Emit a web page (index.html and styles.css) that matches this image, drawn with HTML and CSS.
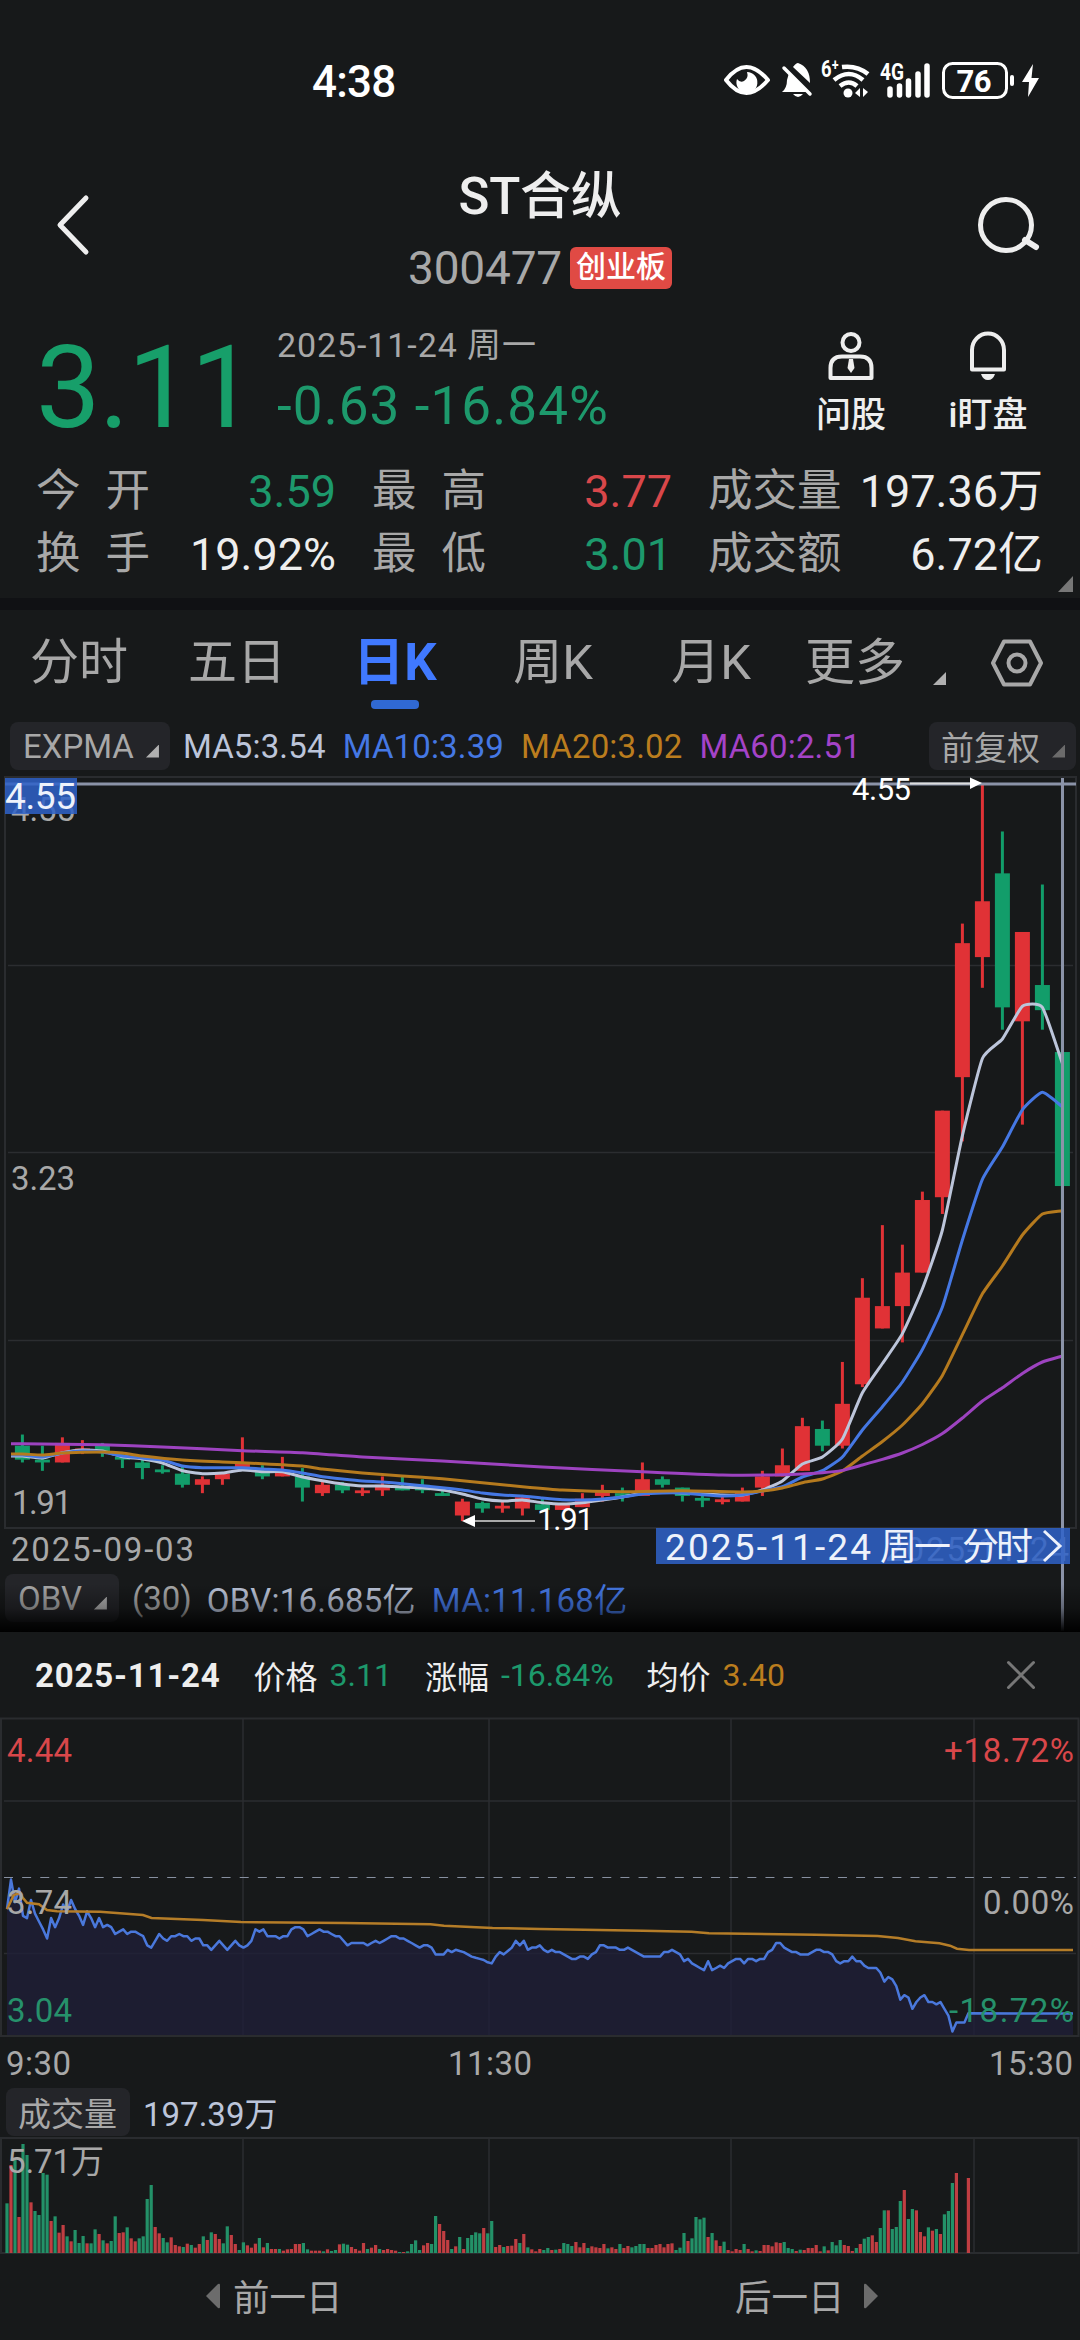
FILE: index.html
```html
<!DOCTYPE html>
<html lang="zh-CN">
<head>
  <meta charset="UTF-8">
  <meta name="viewport" content="width=device-width, initial-scale=1.0">
  <title>ST合纵 300477</title>
  <link rel="stylesheet" href="styles.css">
</head>
<body>

  <div class="status-bar">
    <span class="clock">4:38</span>
    <svg class="status-icons" viewBox="720 50 330 60" width="330" height="60">
      <path d="M726 80 Q746 54 768 80 Q746 106 726 80 Z" fill="none" stroke="#fff" stroke-width="4" stroke-linejoin="round"/>
      <path d="M747 72 A10.5 10.5 0 1 1 737 79 Q740 83 744 81 Q749 78 747 72 Z" fill="#fff"/>
      <path d="M789 73 L809 92 H782 Q787 88 787 80 Z M793 67 Q796 63 798 63 Q810 67 810 83 Z M793 94 H803 Q798 100 793 94 Z" fill="#fff"/>
      <path d="M784 68 L810 94" stroke="#fff" stroke-width="3.5" stroke-linecap="round"/>
      <path d="M842 67 Q857 65 868 74 M834 80 Q849 68 863 80 M840 86 Q849 79 857 86" fill="none" stroke="#fff" stroke-width="4.5"/>
      <circle cx="848" cy="93" r="4.5" fill="#fff"/>
      <path d="M860 88 V97 L855 93 Z M863 97 V88 L868 92 Z" fill="#fff"/>
      <text x="821" y="77" class="tiny" textLength="18" lengthAdjust="spacingAndGlyphs">6⁺</text>
      <text x="880" y="80" class="tiny" textLength="24" lengthAdjust="spacingAndGlyphs">4G</text>
      <path d="M890 89 V95 M899.5 86 V95 M908.5 81 V95 M918 74 V95 M927 66 V95" stroke="#fff" stroke-width="5.5" stroke-linecap="round"/>
      <rect x="943.5" y="63.5" width="63" height="34" rx="9" fill="none" stroke="#fff" stroke-width="3"/>
      <text x="956.5" y="91.5" class="battery" textLength="35">76</text>
      <rect x="1010" y="75" width="4" height="11" rx="2" fill="#fff"/>
      <path d="M1033 64 L1022 82 H1029 L1028 97 L1039 78 H1031.500 Z" fill="#fff"/>
    </svg>
  </div>

  <header class="header">
    <svg class="back" viewBox="0 0 40 64" width="40" height="64"><path d="M33 5 L7 32 L33 59" fill="none" stroke="#eee" stroke-width="5" stroke-linecap="round" stroke-linejoin="round"/></svg>
    <div class="title">
      <h1>ST合纵</h1>
      <p><span class="code">300477</span><span class="board">创业板</span></p>
    </div>
    <svg class="search" viewBox="0 0 66 60" width="66" height="60"><circle cx="30" cy="29" r="25.500" fill="none" stroke="#eee" stroke-width="5"/><path d="M49 44 L60 51" stroke="#eee" stroke-width="6" stroke-linecap="round"/></svg>
  </header>

  <section class="quote">
    <div class="quote-top">
      <div class="price">3.11</div>
      <div class="change">
        <div class="date">2025-11-24 周一</div>
        <div class="delta">-0.63 -16.84%</div>
      </div>
      <div class="action">
        <svg viewBox="0 0 52 52" width="52" height="52" fill="none" stroke="#eee" stroke-width="4"><circle cx="26" cy="12.500" r="8.500"/><path d="M5.500 48 V38 Q5.500 26.500 17 26.500 H35 Q46.500 26.500 46.500 38 V48 Z" stroke-linejoin="round"/><path d="M24 29 H28 L29.500 38 L26 43 L22.500 38 Z" fill="#eee" stroke="none"/></svg>
        <span>问股</span>
      </div>
      <div class="action">
        <svg viewBox="0 0 52 52" width="52" height="52" fill="none" stroke="#eee" stroke-width="4"><path d="M10 39.500 V20 A16 16.500 0 0 1 42 20 V39.500 Z" stroke-linejoin="round"/><path d="M19 44 H33 Q31 50 26 50 Q21 50 19 44 Z" fill="#eee" stroke="none"/></svg>
        <span>i盯盘</span>
      </div>
    </div>
    <div class="stats">
      <div class="stat"><span class="label spaced">今开</span><b class="down">3.59</b></div>
      <div class="stat"><span class="label spaced">最高</span><b class="up">3.77</b></div>
      <div class="stat"><span class="label">成交量</span><b>197.36万</b></div>
      <div class="stat"><span class="label spaced">换手</span><b>19.92%</b></div>
      <div class="stat"><span class="label spaced">最低</span><b class="down">3.01</b></div>
      <div class="stat"><span class="label">成交额</span><b>6.72亿</b></div>
    </div>
    <i class="corner"></i>
  </section>

  <nav class="tabs">
    <span class="tab">分时</span>
    <span class="tab">五日</span>
    <span class="tab active">日K</span>
    <span class="tab">周K</span>
    <span class="tab">月K</span>
    <span class="tab more">更多<i class="tri"></i></span>
    <svg class="settings" viewBox="0 0 56 50" width="56" height="50" fill="none" stroke="#a8a8a8" stroke-width="4"><path d="M15 3.500 H41 L52 25 L41 46.500 H15 L4 25 Z" stroke-linejoin="round"/><circle cx="28" cy="25" r="8.500"/></svg>
  </nav>

  <div class="indicators">
    <span class="chip">EXPMA<i class="tri"></i></span>
    <span class="ma ma5">MA5:3.54</span>
    <span class="ma ma10">MA10:3.39</span>
    <span class="ma ma20">MA20:3.02</span>
    <span class="ma ma60">MA60:2.51</span>
    <span class="chip adjust">前复权<i class="tri dim"></i></span>
  </div>

  <svg id="kline" class="kline" viewBox="0 775 1080 793" width="1080" height="793">
    <rect x="5" y="777" width="1071" height="751" class="frame"/>
    <path d="M8 965.500 H1073 M8 1152.500 H1073 M8 1340.500 H1073" class="grid"/>
    <g id="candles"></g>
    <g id="maLines" fill="none" stroke-width="3" stroke-linejoin="round"></g>

    <text x="11" y="1190" class="axis" textLength="64">3.23</text>
    <text x="12" y="1514" class="axis" textLength="60">1.91</text>
    <text x="11" y="821" class="axis" textLength="64">4.55</text>
    <text x="11" y="1561" class="axis" textLength="183">2025-09-03</text>
    <text x="885" y="1561" class="axis" textLength="184">2025-11-24</text>

    <path d="M5 784 H1076 M1062.500 778 V1631" class="cross"/>
    <path d="M910 783.500 H972" stroke="#ddd" stroke-width="2"/>
    <path d="M970 777.500 L982 783 L970 789 Z" fill="#fff"/>
    <text x="852" y="800" class="mark" textLength="59">4.55</text>
    <path d="M474 1521 H535" stroke="#aaa" stroke-width="2"/>
    <path d="M475 1515 L462 1521 L475 1527 Z" fill="#fff"/>
    <text x="537" y="1530" class="mark" textLength="57">1.91</text>

    <rect x="5" y="778" width="72" height="36" class="tag"/>
    <text x="5" y="809" class="tag-text" textLength="71">4.55</text>
    <rect x="656" y="1528" width="414" height="36" class="tag"/>
    <text x="665" y="1560" class="tag-text" textLength="206">2025-11-24</text>
    <text x="880" y="1560" class="tag-text" textLength="71">周一</text>
    <text x="962" y="1560" class="tag-text" textLength="71">分时</text>
    <path d="M1044 1531 L1060 1546 L1044 1561" fill="none" stroke="#eef2fb" stroke-width="3"/>
  </svg>

  <div class="indicators obv">
    <span class="chip">OBV<i class="tri"></i></span>
    <span class="param">(30)</span>
    <span class="ma5">OBV:16.685亿</span>
    <span class="ma10">MA:11.168亿</span>
  </div>

  <section class="panel">
    <div class="panel-head">
      <strong>2025-11-24</strong>
      <span class="key">价格</span><span class="down">3.11</span>
      <span class="key">涨幅</span><span class="down">-16.84%</span>
      <span class="key">均价</span><span class="ma20">3.40</span>
      <svg class="close" viewBox="0 0 30 30" width="30" height="30"><path d="M2.500 2.500 L27.500 27.500 M27.500 2.500 L2.500 27.500" stroke="#777" stroke-width="3" stroke-linecap="round"/></svg>
    </div>

    <svg id="minute" class="minute" viewBox="0 1716 1080 372" width="1080" height="372">
      <rect x="1" y="1718.500" width="1077.500" height="317.500" class="frame"/>
      <path d="M4 1801 H1076 M4 1953.500 H1076 M243 1719 V2036 M489 1719 V2036 M731 1719 V2036 M974 1719 V2036" class="grid"/>
      <path d="M4 1877.500 H1076" stroke="#8790a0" stroke-dasharray="9 9.130" />
      <g id="priceLine"></g>
      <polyline class="avg" points="7,1909.3 13.8,1895 19,1893.3 27,1902.7 39,1904.3 47,1910 57,1911.3 100,1911.7 143,1915 151.5,1918 203,1920 241,1922 344,1923 430.5,1924.3 444,1925.7 492.5,1928 540,1929 643,1930.7 691.5,1931.7 709,1933.3 815.5,1934.7 877.5,1936 898,1938 915.4,1941.3 939.5,1943.3 950,1945.7 957,1948.7 969,1950 1073,1950"/>
      <text x="7" y="1762" class="axis up" textLength="65">4.44</text>
      <text x="944" y="1762" class="axis up" textLength="130">+18.72%</text>
      <text x="7" y="1914" class="axis" textLength="65">3.74</text>
      <text x="983" y="1914" class="axis" textLength="91">0.00%</text>
      <text x="7" y="2022" class="axis down" textLength="65">3.04</text>
      <text x="949" y="2022" class="axis down" textLength="125">-18.72%</text>
      <text x="6" y="2075" class="axis" textLength="65">9:30</text>
      <text x="448" y="2075" class="axis" textLength="84">11:30</text>
      <text x="989" y="2075" class="axis" textLength="84">15:30</text>
    </svg>

    <div class="volume-head">
      <span class="chip">成交量</span>
      <span class="ma5">197.39万</span>
    </div>

    <svg id="volume" class="volume" viewBox="0 2136 1080 120" width="1080" height="120">
      <rect x="1" y="2138" width="1077.500" height="115" class="frame"/>
      <path d="M243 2138 V2253 M489 2138 V2253 M731 2138 V2253 M974 2138 V2253" class="grid"/>
      <g id="bars"></g>
      <text x="7" y="2173" class="axis" textLength="97">5.71万</text>
    </svg>

    <div class="pager">
      <span><svg viewBox="0 0 16 26" width="16" height="26"><path d="M1 13 L13 1 Q15 0 15 2 V24 Q15 26 13 25 Z" fill="#6c6c6c"/></svg>前一日</span>
      <span>后一日<svg viewBox="0 0 16 26" width="16" height="26"><path d="M15 13 L3 1 Q1 0 1 2 V24 Q1 26 3 25 Z" fill="#6c6c6c"/></svg></span>
    </div>
  </section>

<script src="charts.js"></script>
</body>
</html>
```

FILE: styles.css
```css
* { box-sizing: border-box; }
body {
  margin: 0;
  width: 1080px;
  height: 2340px;
  overflow: hidden;
  display: flex;
  flex-direction: column;
  background: #17191a;
  color: #eeeeee;
  font-family: Roboto, 'Noto Sans CJK SC', sans-serif;
}
h1, p { margin: 0; font-weight: 500; }
svg { display: block; flex: none; }

.up { color: #d9474a; fill: #d9474a; }
.down { color: #1d996c; fill: #26916b; }
.ma5 { color: #bcc5da; }
.ma10 { color: #4578e4; }
.ma20 { color: #bb7d1e; }
.ma60 { color: #a443c8; }

/* status bar */
.status-bar {
  height: 120px;
  padding: 50px 30px 0 312px;
  display: flex;
  justify-content: space-between;
}
.clock {
  font-size: 44px;
  line-height: 64px;
  letter-spacing: -0.8px;
  font-weight: 500;
  color: #fff;
}
.tiny { font-size: 24px; font-weight: 700; fill: #fff; }
.battery { font-size: 31px; font-weight: 700; fill: #fff; }

/* header */
.header {
  height: 190px;
  padding: 0 38px 0 53px;
  display: flex;
}
.back { margin-top: 73px; }
.search { margin: 76px 0 0 auto; }
.title {
  width: 270px;
  margin-left: 312px;
  padding-top: 41px;
  text-align: center;
}
.title h1 {
  font-size: 51px;
  line-height: 72px;
  letter-spacing: -0.3px;
}
.title p {
  display: flex;
  justify-content: center;
  align-items: center;
  gap: 8px;
  height: 70px;
  font-weight: 400;
}
.code {
  font-size: 46px;
  letter-spacing: -0.2px;
  color: #a8a8a8;
}
.board {
  width: 102px;
  height: 42px;
  border-radius: 6px;
  background: #e04a44;
  font-size: 30px;
  line-height: 40px;
  font-weight: 500;
  color: #fff;
}

/* quote */
.quote {
  position: relative;
  height: 300px;
  border-bottom: 12px solid #101114;
}
.quote-top {
  display: flex;
  height: 150px;
  padding-left: 36px;
}
.price {
  width: 241px;
  font-size: 115px;
  line-height: 156px;
  letter-spacing: -1.6px;
  color: #179f6a;
}
.change { width: 502px; }
.date {
  margin-top: 12px;
  font-size: 34px;
  line-height: 46px;
  letter-spacing: 0.9px;
  color: #a8a8a8;
}
.delta {
  margin-top: 6px;
  font-size: 53px;
  line-height: 64px;
  letter-spacing: 1.1px;
  color: #1d996c;
}
.action {
  width: 144px;
  margin-right: -7px;
  padding-top: 20px;
  display: flex;
  flex-direction: column;
  align-items: center;
  font-size: 35px;
  line-height: 68px;
  font-weight: 500;
}
.stats {
  display: grid;
  grid-template-columns: 300px 300px 335px;
  column-gap: 36px;
  grid-auto-rows: 63px;
  padding-left: 36px;
}
.stat {
  display: flex;
  justify-content: space-between;
  align-items: center;
  font-size: 44.5px;
  line-height: 63px;
}
.stat .label { color: #a8a8a8; white-space: nowrap; }
.stat .spaced { letter-spacing: 25px; }
.stat b { font-weight: 400; font-size: 45px; white-space: nowrap; }
.corner {
  position: absolute;
  right: 7px;
  bottom: 6px;
  width: 15px;
  height: 16px;
  background: #777;
  clip-path: polygon(100% 0, 100% 100%, 0 100%);
}

/* tabs */
.tabs {
  height: 105px;
  display: flex;
  align-items: flex-start;
  padding: 25px 0 0 0;
  font-size: 49px;
  line-height: 56px;
  color: #a8a8a8;
}
.tab { width: 158px; text-align: center; }
.tab.active {
  font-size: 51px;
  font-weight: 700;
  color: #4079ff;
}
.tab.active::after {
  content: "";
  display: block;
  width: 48px;
  height: 9px;
  margin: 9px auto 0;
  border-radius: 4px;
  background: #3069d3;
}
.more {
  display: flex;
  align-items: flex-end;
  width: 172px;
  padding-left: 15px;
  font-size: 50px;
}
.tri {
  display: inline-block;
  flex: none;
  width: 13px;
  height: 13px;
  background: #b0b0b0;
  clip-path: polygon(100% 0, 100% 100%, 0 100%);
}
.tri.dim { background: #6b6b6b; }
.more .tri { margin: 0 0 6px 28px; }
.settings { margin: 3px 0 0 27px; }

/* indicator rows */
.indicators {
  height: 60px;
  padding: 7px 4px 5px 10px;
  display: flex;
  align-items: center;
  font-size: 33px;
  white-space: nowrap;
}
.chip {
  display: flex;
  align-items: center;
  height: 48px;
  padding: 0 11px 0 13px;
  border-radius: 8px;
  background: #242529;
  color: #a8a8a8;
}
.chip .tri { margin: 10px 0 0 12px; }
.chip + .ma { margin-left: 13px; }
.ma { margin-right: 17px; letter-spacing: 0.15px; }
.adjust { margin-left: auto; padding-left: 12px; }

.kline { overflow: visible; }
.frame { fill: none; stroke: #2a2c2f; stroke-width: 2; }
.grid { fill: none; stroke: #2b2d30; stroke-width: 1.5; }
.cross { fill: none; stroke: #8b93a8; stroke-width: 3; }
.axis { font-size: 33px; fill: #a8a8a8; }
.axis.up { fill: #d9474a; }
.axis.down { fill: #26916b; }
.mark { font-size: 31px; fill: #fff; }
.tag { fill: #2e62c8; fill-opacity: 0.86; }
.tag-text { font-size: 37px; fill: #eef2fb; }

.obv {
  position: relative;
  height: 64px;
  padding: 0 0 4px 5px;
}
.obv .chip { padding: 0 12px 0 13px; }
.obv .param { margin: 0 15px 0 13px; color: #a8a8a8; }
.obv .ma5 { margin-right: 16px; }
.obv .ma5, .obv .ma10 { letter-spacing: 0.25px; }
.obv::after {
  content: "";
  position: absolute;
  left: 0;
  right: 0;
  bottom: 0;
  height: 48px;
  background: linear-gradient(to bottom, rgba(0,0,0,0), rgba(0,0,0,0.3) 50%, rgba(0,0,0,1));
}

/* intraday panel */
.panel { position: relative; background: #17191a; }
.panel-head {
  display: flex;
  align-items: center;
  height: 84px;
  padding: 2px 44px 0 35px;
  font-size: 32px;
  white-space: nowrap;
}
.panel-head strong { font-size: 33px; letter-spacing: 0.8px; }
.panel-head .key { margin: 0 12px 0 33px; }
.close { margin-left: auto; }
.price-path { fill: none; stroke: #4a78dc; stroke-width: 2.5; stroke-linejoin: round; }
.price-area { fill: #1f1f38; fill-opacity: 0.78; }
.avg { fill: none; stroke: #b57d28; stroke-width: 2.5; }
.volume-head {
  display: flex;
  align-items: center;
  gap: 13px;
  height: 48px;
  padding-left: 6px;
  font-size: 33px;
}
.volume-head .chip { width: 124px; padding: 0 0 0 12px; font-size: 33px; }
.pager {
  display: flex;
  height: 84px;
  padding: 0 0 5px;
  font-size: 36.5px;
  color: #a8a8a8;
}
.pager span {
  width: 540px;
  display: flex;
  align-items: center;
  gap: 12px;
  padding-left: 205px;
}
.pager span + span {
  gap: 18px;
  padding-left: 195px;
}
```

FILE: charts.js
```js
const UP = '#e03236';
const DOWN = '#129d6a';

// high, body top, body bottom, low, direction
const candles = [
  [2.22,2.18,2.13,2.12,0],[2.18,2.13,2.12,2.09,0],[2.21,2.19,2.12,2.12,1],[2.20,2.17,2.16,2.15,1],
  [2.19,2.18,2.16,2.14,0],[2.15,2.14,2.13,2.10,0],[2.13,2.12,2.10,2.06,0],[2.11,2.095,2.085,2.08,0],
  [2.11,2.08,2.04,2.03,0],[2.07,2.06,2.04,2.01,1],[2.08,2.08,2.06,2.04,1],[2.21,2.12,2.10,2.10,1],
  [2.11,2.09,2.07,2.06,0],[2.14,2.09,2.07,2.07,1],[2.10,2.07,2.03,1.98,0],[2.05,2.04,2.01,2.00,1],
  [2.05,2.04,2.02,2.01,0],[2.03,2.02,2.01,2.00,1],[2.07,2.04,2.02,2.00,1],[2.07,2.03,2.02,2.02,0],
  [2.06,2.04,2.02,2.01,0],[2.02,2.01,2.00,2.00,0],[1.99,1.98,1.93,1.91,1],[1.98,1.975,1.955,1.94,0],
  [1.98,1.965,1.955,1.94,1],[2.00,1.995,1.955,1.93,1],[1.99,1.97,1.95,1.95,0],[1.97,1.97,1.95,1.95,1],
  [2.01,1.99,1.96,1.96,1],[2.04,2.02,2.00,1.98,1],[2.03,2.01,2.00,1.98,0],[2.12,2.06,2.00,2.00,1],
  [2.07,2.06,2.04,2.03,0],[2.03,2.03,2.00,1.98,0],[2.00,1.993,1.983,1.96,0],[2.00,1.988,1.978,1.97,1],
  [2.03,2.01,1.98,1.98,1],[2.09,2.07,2.03,2.00,1],[2.17,2.11,2.07,2.07,1],[2.28,2.25,2.09,2.09,1],
  [2.27,2.24,2.18,2.16,0],[2.48,2.33,2.18,2.17,1],[2.78,2.71,2.40,2.39,1],[2.97,2.68,2.60,2.60,1],
  [2.90,2.80,2.68,2.55,1],[3.09,3.06,2.80,2.80,1],[3.38,3.38,3.07,3.01,1],[4.05,3.98,3.50,3.27,1],
  [4.55,4.13,3.93,3.82,1],[4.38,4.23,3.75,3.67,0],[4.02,4.02,3.70,3.33,1],[4.19,3.83,3.74,3.67,0],
  [3.77,3.59,3.11,3.01,0]
];

const kx = i => 22.4 + i * 20;
const ky = p => 784 + (4.55 - p) * 279.2;

document.getElementById('candles').innerHTML = candles.map((c, i) => {
  const color = c[4] ? UP : DOWN;
  const x = kx(i);
  return `<path d="M${x} ${ky(c[0])} V${ky(c[3])}" stroke="${color}" stroke-width="3"/>` +
    `<rect x="${x - 7.5}" y="${ky(c[1])}" width="15" height="${ky(c[2]) - ky(c[1])}" fill="${color}"/>`;
}).join('');

// [bar index, y]
const ma5 = [1456,1458,1452.7,1450,1451,1456.7,1459,1463,1470.7,1473.7,1473,1470,1471.7,1471.7,1477,1480.7,1484,1486,1486,1487,1488,1490,1494,1499,1501,1500,1502.7,1504,1502.7,1500,1497,1493,1492,1493,1494,1495,1495,1490,1481,1464,1457,1439,1392.8,1363.5,1333.6,1288.8,1230,1135.6,1058.5,1039,1006.3,1007.3,1063.5].map((y, i) => [i, y]);
const ma10 = [1455,1457,1453,1451,1452,1456,1458,1460,1466,1467.7,1467.7,1467.7,1469,1470,1473,1476.7,1479,1481,1482,1483.7,1485.7,1487.7,1490,1493,1495,1496,1498,1499.7,1500,1499,1497,1494,1493,1493,1494.7,1496,1495,1491,1486.7,1477,1470.7,1457,1430,1406.7,1382,1349.5,1307,1240,1179.4,1147,1109.8,1092.3,1106.8].map((y, i) => [i, y]);
const ma20 = [[0,1454],[1,1455],[2,1453],[4,1452],[5,1453],[6,1456],[8,1460],[10,1462],[12,1463.7],[14,1466],[15,1469],[17,1473],[19,1476],[21,1478.7],[23,1482.7],[25,1486.7],[27,1490],[30,1491.7],[33,1490.7],[36,1492],[37,1491],[38,1488],[39,1482.7],[40,1479],[41,1471],[42,1456],[43,1441.5],[44,1425],[45,1403.7],[46,1375.4],[47,1334.6],[48,1293.8],[49,1266],[50,1235],[51,1214],[52,1210.7]];
const ma60 = [[0,1443.7],[4,1444.7],[7,1447],[11,1450.7],[14,1452.7],[17,1457],[21,1461],[26,1467],[31,1471.7],[35,1475],[38,1474.7],[40,1472.7],[41,1470.4],[42,1465],[43,1459.4],[44,1453],[45,1444.5],[46,1433.6],[47,1418],[48,1401],[49,1387.8],[50,1373.4],[51,1362],[52,1356]];

function smooth(list) {
  const pts = [[11, list[0][1]], ...list.map(p => [kx(p[0]), p[1]])];
  let d = `M${pts[0]}`;
  for (let i = 0; i < pts.length - 1; i++) {
    const a = pts[i - 1] || pts[i], b = pts[i], c = pts[i + 1], e = pts[i + 2] || c;
    const k = (c[0] - b[0]) / 6;
    const s1 = (c[1] - a[1]) / (c[0] - a[0]), s2 = (e[1] - b[1]) / (e[0] - b[0]);
    d += ` C${b[0] + k} ${b[1] + s1 * k} ${c[0] - k} ${c[1] - s2 * k} ${c[0]} ${c[1]}`;
  }
  return d;
}

document.getElementById('maLines').innerHTML =
  [[ma5, '#bcc5da'], [ma10, '#4578e4'], [ma20, '#b57a1e'], [ma60, '#9d43c0']]
    .map(([list, color]) => `<path d="${smooth(list)}" stroke="${color}"/>`).join('');

// price for every minute
const prices = [
  3.60,3.73,3.63,3.69,3.57,3.56,3.64,3.58,3.545,3.51,3.47,3.56,3.52,3.56,3.62,3.59,3.64,3.60,3.57,3.53,
  3.59,3.56,3.52,3.56,3.52,3.53,3.52,3.49,3.50,3.51,3.49,3.50,3.50,3.49,3.48,3.44,3.43,3.46,3.49,3.47,
  3.46,3.48,3.48,3.49,3.48,3.48,3.46,3.47,3.47,3.44,3.44,3.42,3.44,3.46,3.44,3.42,3.44,3.46,3.44,3.43,
  3.44,3.46,3.51,3.50,3.51,3.48,3.48,3.48,3.47,3.48,3.48,3.51,3.52,3.52,3.51,3.48,3.49,3.50,3.51,3.50,
  3.50,3.49,3.48,3.48,3.46,3.44,3.45,3.45,3.45,3.45,3.44,3.45,3.46,3.45,3.46,3.47,3.48,3.48,3.47,3.47,
  3.46,3.45,3.44,3.43,3.44,3.44,3.43,3.40,3.40,3.40,3.42,3.41,3.42,3.415,3.41,3.40,3.39,3.385,3.38,3.375,
  3.365,3.36,3.39,3.41,3.40,3.415,3.43,3.46,3.44,3.46,3.42,3.43,3.43,3.44,3.42,3.41,3.42,3.41,3.41,3.40,
  3.39,3.38,3.38,3.39,3.39,3.38,3.40,3.41,3.44,3.44,3.43,3.43,3.43,3.42,3.42,3.43,3.42,3.41,3.40,3.39,
  3.39,3.39,3.39,3.39,3.41,3.41,3.42,3.41,3.40,3.37,3.38,3.36,3.35,3.34,3.33,3.37,3.33,3.34,3.35,3.34,
  3.36,3.37,3.38,3.38,3.36,3.38,3.38,3.37,3.38,3.38,3.41,3.42,3.45,3.45,3.43,3.42,3.41,3.41,3.40,3.40,
  3.40,3.41,3.42,3.42,3.41,3.41,3.40,3.37,3.36,3.37,3.37,3.39,3.37,3.37,3.35,3.34,3.34,3.34,3.32,3.28,
  3.30,3.29,3.26,3.20,3.22,3.21,3.16,3.19,3.21,3.22,3.19,3.19,3.18,3.19,3.16,3.13,3.06,3.10,3.10,3.10,3.14
];
const mx = i => 7 + i * 4.006;
const line = prices.map((p, i) => `${mx(i).toFixed(1)},${(1877.3 + (3.74 - p) * 226.7).toFixed(1)}`).join(' ') + ' 1073,2013.5';
document.getElementById('priceLine').innerHTML =
  `<polygon class="price-area" points="7,2035 ${line} 1073,2035"/><polyline class="price-path" points="${line}"/>`;

// minute volume, negative = falling minute
const volumes = [
  -149,264,-279,108,-327,-294,152,-126,-114,-240,-235,96,-110,61,84,-50,35,-69,-30,-51,
  29,-29,-71,57,-38,29,-36,-110,60,62,-77,44,35,-44,-50,-162,-204,78,59,-45,
  -32,47,24,20,-18,28,-24,16,27,-50,39,-62,57,42,-29,-80,54,27,-9,-32,
  23,16,28,-45,17,-30,12,12,-12,7,11,12,27,27,-30,-11,7,7,7,-5,
  11,-6,-9,26,-28,-25,18,12,7,30,-12,16,24,-12,9,12,9,7,-3,3,
  -5,-27,-38,-9,23,30,-27,-111,87,66,39,-12,20,-48,12,-45,-54,-62,-59,75,
  -59,-96,18,24,-18,21,22,42,-30,57,-17,11,5,12,-9,-15,9,-10,12,-30,
  -27,-21,33,17,30,-15,20,17,15,27,-14,17,12,-27,15,21,-17,-21,-27,-27,
  15,15,24,27,17,27,29,-9,-16,-60,36,-44,-108,-101,-106,48,-60,38,21,-34,
  9,5,12,9,-27,12,5,-8,6,24,24,20,32,30,-33,-15,-12,6,-10,9,
  15,15,24,5,-20,8,-33,-23,-39,24,21,6,-15,27,-43,-48,53,33,-75,-128,
  128,-72,-78,-156,189,-102,-132,128,63,50,-77,67,-72,57,-116,-126,-210,240,0,0,225
];
document.getElementById('bars').innerHTML = volumes.map((v, i) => {
  const h = Math.abs(v) / 3;
  return `<rect x="${(mx(i) - 1.6).toFixed(1)}" y="${2253 - h}" width="3.2" height="${h}" fill="${v > 0 ? '#c03e42' : '#239168'}"/>`;
}).join('');
```
